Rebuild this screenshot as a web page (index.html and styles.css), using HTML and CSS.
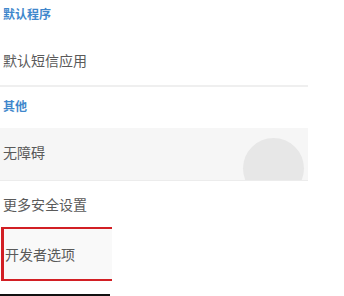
FILE: index.html
```html
<!DOCTYPE html>
<html>
<head>
<meta charset="utf-8">
<link rel="stylesheet" href="styles.css">
</head>
<body>
<div class="page">
  <div class="header h1">默认程序</div>
  <div class="item item1">默认短信应用</div>
  <div class="sep"></div>
  <div class="header h2">其他</div>
  <div class="item pressed">无障碍<span class="ripple"></span></div>
  <div class="item item3">更多安全设置</div>
  <div class="item dev">开发者选项</div>
  <div class="bottomline"></div>
</div>
</body>
</html>
```

FILE: styles.css
```css
html, body {
  margin: 0;
  padding: 0;
  background: #ffffff;
}
.page {
  width: 308px;
  display: flex;
  flex-direction: column;
  font-family: "Noto Sans CJK SC", "Noto Sans", sans-serif;
}
.header {
  box-sizing: border-box;
  color: #3f87cc;
  font-size: 12px;
  font-weight: 700;
  line-height: 20px;
  padding-left: 3px;
}
.h1 {
  height: 28px;
  padding-top: 4px;
}
.h2 {
  height: 41px;
  padding-top: 9px;
}
.item {
  box-sizing: border-box;
  color: #5a5a5a;
  font-size: 14px;
  line-height: 20px;
  padding-left: 3px;
}
.item1 {
  height: 57px;
  padding-top: 22px;
}
.sep {
  height: 2px;
  background: #efefef;
}
.pressed {
  position: relative;
  overflow: hidden;
  height: 53px;
  padding-top: 14px;
  background: #f6f6f6;
  border-bottom: 1px solid #ececec;
}
.ripple {
  position: absolute;
  left: 243px;
  top: 10px;
  width: 61px;
  height: 61px;
  border-radius: 50%;
  background: #e7e7e7;
}
.item3 {
  height: 46px;
  padding-top: 13px;
}
.dev {
  width: 111px;
  height: 54px;
  padding-top: 15px;
  padding-left: 1px;
  margin-left: 1px;
  border-top: 2px solid #d21f24;
  border-left: 3px solid #d21f24;
  border-bottom: 2px solid #d21f24;
  background: #f9f9f9;
}
.bottomline {
  margin-top: 13px;
  width: 110px;
  height: 2px;
  background: #111111;
}
```
